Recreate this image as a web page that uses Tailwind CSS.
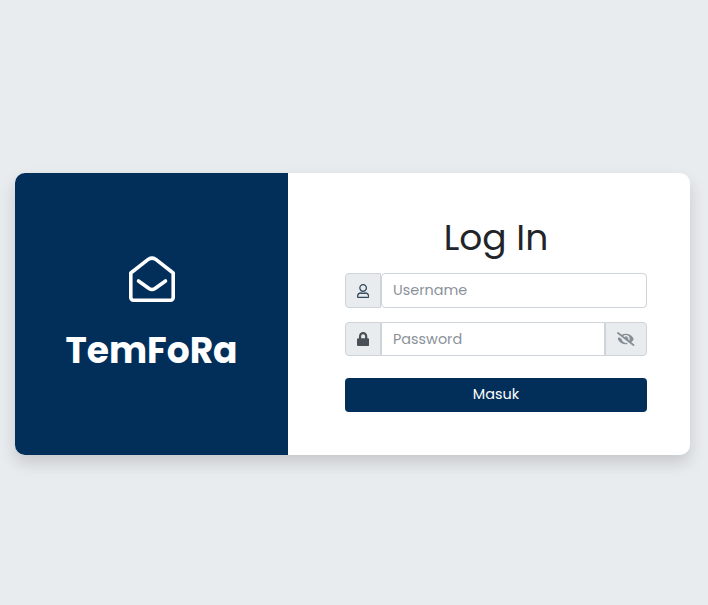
<!DOCTYPE html>
<html><head><meta charset="utf-8"><script src="https://cdn.jsdelivr.net/npm/@tailwindcss/browser@4"></script></head>
<body class="m-0 bg-[#e9ecef] font-['Poppins','Lato','Open_Sans',sans-serif]">
<div class="h-[605px] flex items-start pt-[173px] px-[15px]">
<div class="w-[675px] h-[282px] flex rounded-[10px] bg-white shadow-[0_8px_16px_rgba(0,0,0,0.15)]">
<div class="w-[273px] shrink-0 rounded-l-[10px] bg-[#012f5a] flex flex-col items-center pt-[83px] text-white">
<svg width="46" height="46" viewBox="0 0 46 46" fill="none" stroke="white" stroke-width="3.6" stroke-linecap="round" stroke-linejoin="round"><path d="M1.8 17 19.5 3.2Q23 1 26.5 3.2L44.2 17V41.5a2.7 2.7 0 0 1-2.7 2.7H4.5A2.7 2.7 0 0 1 1.8 41.5Z"/><path d="M9.5 25 20 32.5Q23 34.5 26 32.5L36.5 25"/></svg>
<div class="text-[36px] font-bold mt-[22px] leading-[54px]">TemFoRa</div>
</div>
<div class="flex-1 min-w-0 pl-[57px] pr-[43px] pt-[38px] flex flex-col">
<h1 class="text-[36px] text-center text-[#212529] leading-[54px] h-[54px]">Log In</h1>
<div class="flex h-[35px] mt-[8px]">
<span class="w-[36px] shrink-0 bg-[#e9ecef] border border-[#ced4da] rounded-l flex items-center justify-center"><svg width="12.25" height="14" viewBox="0 0 448 512" fill="#34495e"><path d="M313.6 304c-28.7 0-42.5 16-89.6 16-47.1 0-60.8-16-89.6-16C60.2 304 0 364.2 0 438.4V464c0 26.5 21.5 48 48 48h352c26.5 0 48-21.5 48-48v-25.6c0-74.2-60.2-134.4-134.4-134.4zM400 464H48v-25.6c0-47.6 38.8-86.4 86.4-86.4 14.6 0 38.3 16 89.6 16 51.7 0 74.9-16 89.6-16 47.6 0 86.4 38.8 86.4 86.4V464zM224 288c79.5 0 144-64.5 144-144S303.5 0 224 0 80 64.5 80 144s64.5 144 144 144zm0-240c52.9 0 96 43.1 96 96s-43.1 96-96 96-96-43.1-96-96 43.1-96 96-96z"/></svg></span>
<input placeholder="Username" class="flex-1 min-w-0 border border-[#ced4da] rounded px-[11px] text-[14.4px] placeholder:text-[#8a929a]">
</div>
<div class="flex h-[34px] mt-[14px]">
<span class="w-[36px] shrink-0 bg-[#e9ecef] border border-[#ced4da] rounded-l flex items-center justify-center"><svg width="12.25" height="14" viewBox="0 0 448 512" fill="#495057"><path d="M400 224h-24v-72C376 68.2 307.8 0 224 0S72 68.2 72 152v72H48c-26.5 0-48 21.5-48 48v192c0 26.5 21.5 48 48 48h352c26.5 0 48-21.5 48-48V272c0-26.5-21.5-48-48-48zm-104 0H152v-72c0-39.7 32.3-72 72-72s72 32.3 72 72v72z"/></svg></span>
<input placeholder="Password" class="flex-1 min-w-0 border border-[#ced4da] pt-[2px] px-[11px] text-[14.4px] placeholder:text-[#8a929a]">
<span class="w-[42px] shrink-0 bg-[#e9ecef] border border-[#ced4da] rounded-r flex items-center justify-center"><svg width="17.5" height="14" viewBox="0 0 640 512" fill="#868e96"><path d="M320 400c-75.85 0-137.25-58.71-142.9-133.11L72.2 185.82c-13.79 17.3-26.48 35.59-36.72 55.59a32.35 32.35 0 0 0 0 29.19C89.71 376.41 197.07 448 320 448c26.91 0 52.87-4 77.89-10.46L346 397.39a144.13 144.13 0 0 1-26 2.61zm313.82 58.1l-110.55-85.44a331.25 331.25 0 0 0 81.25-102.07 32.35 32.35 0 0 0 0-29.19C550.29 135.59 442.93 64 320 64a308.15 308.15 0 0 0-147.32 37.7L45.46 3.37A16 16 0 0 0 23 6.18L3.37 31.45A16 16 0 0 0 6.18 53.9l588.36 454.73a16 16 0 0 0 22.46-2.81l19.64-25.27a16 16 0 0 0-2.82-22.45zm-183.72-142l-39.3-30.38A94.75 94.75 0 0 0 416 256a94.76 94.76 0 0 0-121.31-92.21A47.65 47.65 0 0 1 304 192a46.64 46.64 0 0 1-1.54 10l-73.61-56.89A142.31 142.31 0 0 1 320 112a143.92 143.92 0 0 1 144 144c0 21.63-5.29 41.79-13.9 60.11z"/></svg></span>
</div>
<button class="mt-[22px] h-[34px] bg-[#012f5a] text-white text-[14.4px] rounded">Masuk</button>
</div>
</div>
</div>
</body></html>
